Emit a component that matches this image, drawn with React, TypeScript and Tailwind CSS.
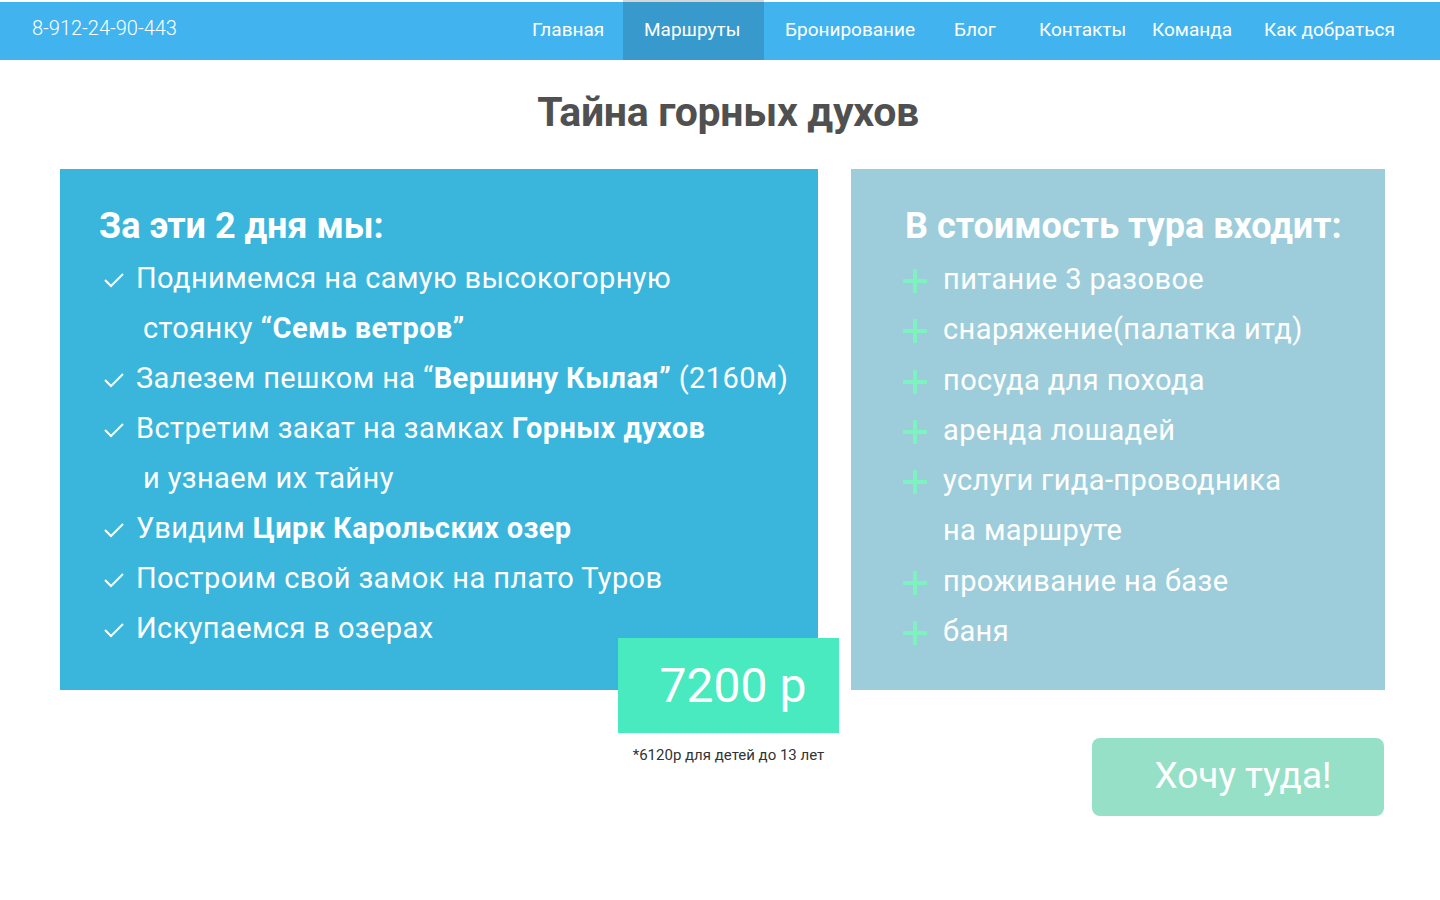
import React from 'react';

const navItems = [
  { label: 'Главная', w: 'w-[112px]' },
  { label: 'Маршруты', w: 'w-[141px]', active: true },
  { label: 'Бронирование', w: 'w-[169px]' },
  { label: 'Блог', w: 'w-[85px]' },
  { label: 'Контакты', w: 'w-[113px]' },
  { label: 'Команда', w: 'w-[112px]' },
  { label: 'Как добраться', w: 'w-[176px]' },
];

const Check = () => (
  <svg width="22" height="16" viewBox="0 0 22 16" className="shrink-0">
    <polyline points="2,8 8,14 20,2" fill="none" stroke="white" strokeWidth="2" />
  </svg>
);

const Plus = () => (
  <svg width="24" height="24" viewBox="0 0 24 24" className="shrink-0">
    <rect x="10" y="0" width="4" height="24" fill="#7ef3c0" />
    <rect x="0" y="10" width="24" height="4" fill="#7ef3c0" />
  </svg>
);

const CheckRow: React.FC<{ children: React.ReactNode }> = ({ children }) => (
  <div className="flex items-center h-[50px]">
    <div className="w-[37px] pl-[4px] pt-[3px]">
      <Check />
    </div>
    <span>{children}</span>
  </div>
);

const PlusRow: React.FC<{ children: React.ReactNode }> = ({ children }) => (
  <div className="flex items-center h-[50.3px]">
    <div className="w-[40px] pt-[4px]">
      <Plus />
    </div>
    <span>{children}</span>
  </div>
);

export default function App() {
  return (
    <div className="min-h-screen bg-white font-['Roboto',sans-serif]">
      {/* Header */}
      <header className="h-[60px] flex items-stretch">
        <div className="flex-1 flex items-stretch mt-[2px] bg-[#41b4f0]">
          <div className="pl-[32px] pt-[11px] text-[20px] font-light text-white">8-912-24-90-443</div>
          <nav className="ml-auto flex items-stretch pr-[21px]">
            {navItems.map((item) => (
              <a
                key={item.label}
                className={
                  item.active
                    ? `${item.w} -mt-[2px] border-t-2 border-[#d6d6d6] bg-[#3799cc] pl-[21px] flex items-center pb-[1px] text-[19px] text-white`
                    : `${item.w} pl-[21px] flex items-center pb-[1px] text-[19px] text-white`
                }
              >
                {item.label}
              </a>
            ))}
          </nav>
        </div>
      </header>

      <h1 className="text-center pl-[16px] text-[41px] font-bold text-[#505050] mt-[28px] leading-[48px] tracking-[-0.3px]">
        Тайна горных духов
      </h1>

      <div className="flex gap-[33px] pl-[60px] mt-[33px]">
        {/* Left card */}
        <div className="relative w-[758px] h-[521px] bg-[#3ab6dc] text-white pl-[39px] pt-[35px]">
          <h2 className="text-[36px] font-bold leading-[44px]">За эти 2 дня мы:</h2>
          <div className="mt-[5px] text-[29px] leading-[50px] tracking-[0.4px]">
            <CheckRow>Поднимемся на самую высокогорную</CheckRow>
            <div className="pl-[44px] h-[50px]">
              стоянку <b>“Семь ветров”</b>
            </div>
            <CheckRow>
              Залезем пешком на “<b>Вершину Кылая”</b> (2160м)
            </CheckRow>
            <CheckRow>
              Встретим закат на замках <b>Горных духов</b>
            </CheckRow>
            <div className="pl-[44px] h-[50px]">и узнаем их тайну</div>
            <CheckRow>
              Увидим <b>Цирк Карольских озер</b>
            </CheckRow>
            <CheckRow>Построим свой замок на плато Туров</CheckRow>
            <CheckRow>Искупаемся в озерах</CheckRow>
          </div>

          {/* Price */}
          <div className="absolute left-[558px] top-[469px] w-[221px] flex flex-col items-center">
            <div className="w-full h-[95px] bg-[#4aeac0] flex items-center justify-center pl-[9px] text-[48px] leading-none text-white">
              7200 р
            </div>
            <div className="mt-[11px] text-[15px] text-[#333]">*6120р для детей до 13 лет</div>
          </div>
        </div>

        {/* Right card */}
        <div className="w-[534px] h-[521px] bg-[#9dcdda] text-white pl-[52px] pt-[35px]">
          <h2 className="text-[36px] font-bold leading-[44px] pl-[2px]">В стоимость тура входит:</h2>
          <div className="mt-[6px] text-[29px] leading-[50px] tracking-[0.4px]">
            <PlusRow>питание 3 разовое</PlusRow>
            <PlusRow>снаряжение(палатка итд)</PlusRow>
            <PlusRow>посуда для похода</PlusRow>
            <PlusRow>аренда лошадей</PlusRow>
            <PlusRow>услуги гида-проводника</PlusRow>
            <div className="pl-[40px] h-[50.3px]">на маршруте</div>
            <PlusRow>проживание на базе</PlusRow>
            <PlusRow>баня</PlusRow>
          </div>
        </div>
      </div>

      <div className="flex justify-end pr-[56px] mt-[48px]">
        <button className="w-[292px] h-[78px] rounded-[8px] bg-[#96e0c7] text-white text-[37px] pl-[10px] pb-[2px]">
          Хочу туда!
        </button>
      </div>
    </div>
  );
}
